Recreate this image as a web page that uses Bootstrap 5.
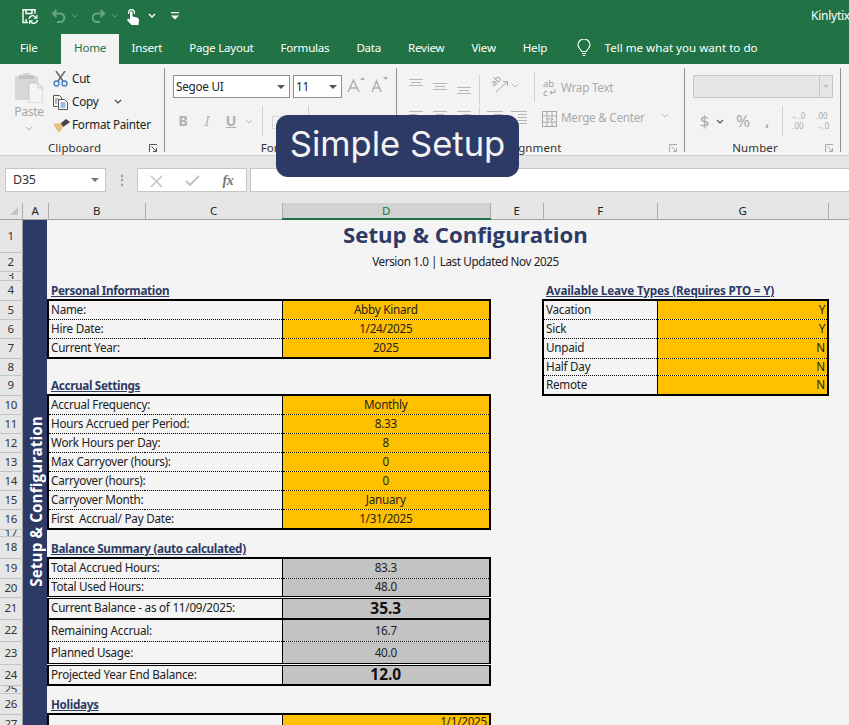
<!doctype html>
<html lang="en">
<head>
<meta charset="utf-8">
<title>Setup &amp; Configuration</title>
<link href="https://cdn.jsdelivr.net/npm/bootstrap@5.3.0/dist/css/bootstrap.min.css" rel="stylesheet">
<style>
html,body{margin:0;height:100%;overflow:hidden;background:#f4f4f4}
body{font-family:"Noto Sans","Open Sans",sans-serif;font-size:11.7px;color:#222;letter-spacing:-.25px}
.xl-app{width:849px;height:725px;overflow:hidden;position:relative}
.xl-app>*{flex:none}
.xl-title{height:32px;background:#217346;color:#fff}
.q-save{margin-left:22px}.q5{margin-left:5px}.q8{margin-left:8px}.q12{margin-left:12px}.q13{margin-left:13px}.q15{margin-left:15px}
.xl-owner{margin-left:auto;white-space:nowrap;width:38px;overflow:hidden;font-size:12px}
.xl-tabs{height:32px;background:#217346;color:#fff;padding-left:6.5px}
.xl-tab{padding:0 13.5px;height:30px;margin-top:2px;line-height:28px;font-size:11.6px;white-space:nowrap}
.xl-tab-on{background:#f3f3f3;color:#217346;margin-left:10px;margin-right:-1px;padding:0;width:58px}
.xl-tell{margin-left:16px}
.xl-tell-txt{padding:0 0 0 6px;letter-spacing:0}
.xl-rib{height:92px;background:#f3f3f3;border-bottom:1px solid #d0d0d0}
.rg{height:84px;margin-top:4px;border-right:1px solid #8f8f8f}
.rg-clip{width:165px}.rg-font{width:232px}.rg-align{width:288px}.rg-num{width:156px}
.rg-body{height:72px}
.rg-lab{height:12px;line-height:16px;font-size:11.5px;letter-spacing:.1px;color:#333}
.rg-name{flex:1;text-align:center}
.rg-launch{width:15px}
.paste-col{width:53px;padding-left:5px;padding-top:3px;color:#a8a8a8;font-size:12px}
.paste-txt{line-height:14px;margin-top:2px}
.small-col{margin-top:-1px}
.small-btn{height:23px;white-space:nowrap}
.small-ic{width:19px}
.sel{height:23px;background:#fff;border:1px solid #8f8f8f;padding:0 2px;line-height:21px;position:relative}
.sel-font{width:117px}.sel-size{width:49px;margin-left:3px}
.sel-arr{position:absolute;right:4px;top:9px;width:0;height:0;border:4px solid transparent;border-top-color:#555;border-bottom:0}
.mute{color:#b0b0b0}
.rbar{padding-top:7px}
.rrow2{padding-top:8px;margin-left:-2px}
.slot{width:24px;text-align:center;height:20px;line-height:20px;font-size:14px;font-weight:700}
.slot-s{width:12px;text-align:center;height:20px;line-height:18px}
.slot-m{width:19px;text-align:center;height:23px}
.vsep{width:1px;height:30px;background:#cfcfcf}
.sep-mid{margin:0 7px 0 7px}
.sep-b{margin:0 3px}
.sep-f{margin:0 0 0 18px}
.slot-border{margin-left:-4px}
.slot-fill{margin-left:4px}
.w-fill{width:40px;text-align:center;margin-left:6px}
.al-left{width:137px;padding-left:7px}
.al-row{height:30px}
.al-r2{margin-top:9px}
.al-right{padding-left:7px;padding-top:11px;color:#aaa}
.al-item{height:30px;white-space:nowrap;line-height:16px}
.al-ic{width:19px}
.ic-txt{font-family:"Noto Sans",sans-serif;font-weight:400;font-size:9.5px;fill:#a0a0a0;stroke:none;letter-spacing:0}
.sel-num{width:140px;height:23px;margin-left:8px;background:#e6e6e6;border:1px solid #c6c6c6;position:relative}
.sel-num i{position:absolute;right:0;top:0;width:13px;height:21px;border-left:1px solid #c6c6c6}
.sel-num i::after{content:"";position:absolute;left:3px;top:9px;border:3px solid transparent;border-top-color:#c0c0c0;border-bottom:0}
.num-row{padding:8px 0 0 10px;color:#aaa}
.num-slot{text-align:center;height:22px;line-height:22px}
.num-big{font-size:17px;font-weight:400}
.num-pct{margin-left:5px}
.dec{font-size:8px;line-height:10px;font-weight:400;letter-spacing:0}
.xl-fbar{height:47px;background:#e6e6e6;padding-top:12px;align-items:flex-start}
.name-box{width:101px;height:24px;margin-left:5px;background:#fff;border:1px solid #c6c6c6;padding-left:7px;line-height:22px;font-size:12.5px;position:relative;color:#333}
.name-box i{position:absolute;right:6px;top:9px;width:0;height:0;border:4px solid transparent;border-top-color:#777;border-bottom:0}
.fb-dots{width:31px;text-align:center;color:#999;height:24px;line-height:22px;font-weight:700}
.fb-btns{width:110px;height:24px;background:#fff;border:1px solid #c6c6c6}
.fb-btn{width:36px;text-align:center}
.fb-fx{color:#777;font-family:"Liberation Serif",serif;font-size:14px;font-style:italic;font-weight:700}
.fb-input{height:24px;margin-left:3px;flex:1;background:#fff;border:1px solid #c6c6c6;border-right:0}
.grid-x{table-layout:fixed;width:849px;border-collapse:collapse}
.grid-x td,.grid-x th{padding:0;white-space:pre;overflow:hidden;line-height:1;font-weight:400}
.cw-r{width:22px}.cw-a{width:26px}.cw-b{width:97px}.cw-c{width:137px}.cw-d{width:208px}.cw-e{width:53px}.cw-f{width:114px}.cw-g{width:171px}.cw-h{width:21px}
.hd th{height:16px;background:#e6e6e6;border-right:1px solid #ababab;border-bottom:1px solid #a0a0a0;text-align:center;color:#222;font-size:11.5px}
.hd th.hd-sel{background:#d2d2d2;border-bottom:2px solid #217346;color:#217346}
.hd th.hd-last{border-right:0}
.grid-x th.rn{background:#e6e6e6;border-right:1px solid #a0a0a0;border-bottom:1px solid #c4c4c4;text-align:center;color:#333;font-size:11.5px}
.rn-clip{overflow:hidden;height:6px;line-height:6px}
.rh6{height:7px}.rh8{height:8px}.rh9{height:9px}.rh16{height:17px}.rh19{height:19px}.rh20{height:20px}.rh21{height:21px}.rh22{height:22px}.rh23{height:23px}.rh33{height:33px}
.side{background:#2d3a66;color:#fff;vertical-align:middle;text-align:center;padding-top:50px!important}
.side-txt{writing-mode:vertical-rl;transform:rotate(180deg);display:inline-block;font-weight:700;font-size:15.2px;letter-spacing:.15px;line-height:26px;font-family:"Open Sans",sans-serif}
.ttl{text-align:center;padding-left:34px!important;color:#2d3a66;font-size:22.2px;font-weight:700!important;letter-spacing:0;font-family:"Open Sans",sans-serif;vertical-align:top}
.ttl span{display:block;line-height:30px}
.ver{text-align:center;padding-left:34px!important;color:#222;letter-spacing:-.4px}
.sec{color:#2d3a66;font-weight:700!important;text-decoration:underline;vertical-align:bottom;padding:0 0 2px 3px!important;letter-spacing:-.33px}
.sec-wide{letter-spacing:-.18px}
.lbl{padding:0 0 0 2px!important;background:#f4f4f4}
.nudge{padding-top:2px!important}
.in{background:#ffc000;text-align:center}
.calc{background:#c3c3c3;text-align:center}
.big{font-size:15.5px;font-weight:700!important;color:#111;letter-spacing:0}
.in-end{text-align:right!important;padding-right:2px!important}
.cell-top{vertical-align:top;padding-top:1px!important}
.bT{border-top:2px solid #000}.bB{border-bottom:2px solid #000}.bL{border-left:2px solid #000}.bR{border-right:2px solid #000}
.bdiv{border-right:1px solid #000}
.dot{border-bottom:1px dotted #000}
.dbl{border-bottom:3px double #000}
.banner{position:absolute;left:276px;top:115px;width:243px;height:62px;background:#2d3a66;border-radius:12px;color:#f3f3f3;font-family:Inter,sans-serif;font-size:34.6px;font-weight:400;letter-spacing:0;text-align:center;line-height:57px}
</style>
</head>
<body>
<div class="xl-app d-flex flex-column">
  <div class="xl-title d-flex align-items-center">
    <div class="d-flex align-items-center">
      <svg class="q-save" width="16" height="15" viewBox="0 0 16 15" fill="none" stroke="#fff" stroke-width="1.400"><path d="M6 13.500H1V.7h12v4"/><path d="M4 1v3.500h6V1M4 13v-3"/><path d="M7 10a3.700 3.700 0 0 1 6.500-2l1 1M15.500 11a3.700 3.700 0 0 1-6.500 2l-1-1"/><path d="M15 6v3.300h-3.300M7.500 15v-3.300h3.300" stroke-width="1.100"/></svg>
      <svg class="q13" width="15" height="14" viewBox="0 0 15 14" fill="none" stroke="#6aa584" stroke-width="2"><path d="M5.500 1 2 4.500 5.500 8"/><path d="M2 4.500h7a4 4 0 0 1 0 8.500H6"/></svg>
      <svg class="q5" width="8" height="6" viewBox="0 0 8 6" fill="none" stroke="#5f9c7c"><path d="m1 1 3 3 3-3"/></svg>
      <svg class="q12" width="15" height="14" viewBox="0 0 15 14" fill="none" stroke="#6aa584" stroke-width="2"><path d="M9.500 1 13 4.500 9.500 8"/><path d="M13 4.500H6a4 4 0 0 0 0 8.500h3"/></svg>
      <svg class="q5" width="8" height="6" viewBox="0 0 8 6" fill="none" stroke="#5f9c7c"><path d="m1 1 3 3 3-3"/></svg>
      <svg class="q8" width="13" height="17" viewBox="0 0 13 17" fill="#fff"><path d="M1 4.500a3.500 3.500 0 0 1 7 0V6H6.800V4.500a2.300 2.300 0 0 0-4.600 0V6H1z"/><path d="M3 3.500h2.500v5l3.500.8c2 .4 3 1.200 3 2.700l-.5 5H4.500L0 12l1-1.500 2 1.300z"/></svg>
      <svg class="q8" width="8" height="6" viewBox="0 0 8 6" fill="none" stroke="#fff" stroke-width="1.400"><path d="m1 1 3 3 3-3"/></svg>
      <svg class="q15" width="8" height="8" viewBox="0 0 8 8" fill="#fff"><rect width="8" height="1.300"/><path d="M0 3.500h8L4 7.500z"/></svg>
    </div>
    <div class="xl-owner">Kinlytix</div>
  </div>
  <div class="xl-tabs d-flex">
    <div class="xl-tab">File</div>
    <div class="xl-tab xl-tab-on text-center">Home</div>
    <div class="xl-tab">Insert</div>
    <div class="xl-tab">Page Layout</div>
    <div class="xl-tab">Formulas</div>
    <div class="xl-tab">Data</div>
    <div class="xl-tab">Review</div>
    <div class="xl-tab">View</div>
    <div class="xl-tab">Help</div>
    <div class="d-flex align-items-center xl-tell">
      <svg class="me-2" width="14" height="18" viewBox="0 0 14 18" fill="none" stroke="#fff" stroke-width="1.100"><path d="M4.500 12.500C4 10 1 9 1 6a6 6 0 0 1 12 0c0 3-3 4-3.500 6.500z"/><path d="M5 14.500h4M5.500 16.500h3"/></svg>
      <div class="xl-tab xl-tell-txt">Tell me what you want to do</div>
    </div>
  </div>
  <div class="xl-rib d-flex">
    <div class="rg rg-clip d-flex flex-column">
      <div class="rg-body d-flex">
        <div class="paste-col text-center">
          <svg width="28" height="32" viewBox="0 0 28 32"><path d="M0 5h8V2h7v3h8v24H0z" fill="#d9d6d6"/><rect x="4" y="4" width="15" height="4" fill="#c4c2c2"/><path d="M14 12h9l5 5v15H14z" fill="#f4f4f6" stroke="#c9c7c9"/><path d="M23 12v5h5" fill="none" stroke="#c9c7c9"/></svg>
          <div class="paste-txt">Paste</div>
          <svg width="8" height="6" viewBox="0 0 8 6" fill="none" stroke="#aaa"><path d="m1 1 3 3 3-3"/></svg>
        </div>
        <div class="small-col">
          <div class="small-btn d-flex align-items-center"><div class="small-ic"><svg width="15" height="16" viewBox="0 0 15 16" fill="none"><path d="M3 0l7 10M12 0 5 10" stroke="#666" stroke-width="1.500"/><circle cx="3.500" cy="12.500" r="2.500" stroke="#3b7cc2" stroke-width="1.300"/><circle cx="11.500" cy="12.500" r="2.500" stroke="#3b7cc2" stroke-width="1.300"/></svg></div>Cut</div>
          <div class="small-btn d-flex align-items-center"><div class="small-ic"><svg width="16" height="15" viewBox="0 0 16 15" fill="none" stroke="#555"><path d="M4.500 11.500H.5V.5h6l2 2v2"/><path d="M5.500 4.500h6l3 3v7h-9z" fill="#fff"/><path d="M7.500 8h5M7.500 10h5M7.500 12h5" stroke="#3b7cc2"/><path d="M2 4h3M2 6h2M2 8h2" stroke="#777"/></svg></div>Copy<svg class="ms-3" width="8" height="6" viewBox="0 0 8 6" fill="none" stroke="#444" stroke-width="1.200"><path d="m1 1 3 3 3-3"/></svg></div>
          <div class="small-btn d-flex align-items-center"><div class="small-ic"><svg width="17" height="14" viewBox="0 0 17 14"><path d="M0 5 8 4l2 4-4 6z" fill="#e6bf7e"/><path d="M8 4 13 0l4 3-4 3-3 2z" fill="#444"/></svg></div>Format Painter</div>
        </div>
      </div>
      <div class="rg-lab d-flex"><div class="rg-name">Clipboard</div><div class="rg-launch"><svg width="9" height="9" viewBox="0 0 9 9" fill="none" stroke="#555"><path d="M.5 8V.5H8M2.500 2.500 7 7M4 7.500h3.500V4"/></svg></div></div>
    </div>
    <div class="rg rg-font d-flex flex-column">
      <div class="rg-body ps-2">
        <div class="d-flex rbar">
          <div class="sel sel-font">Segoe UI<span class="sel-arr"></span></div>
          <div class="sel sel-size">11<span class="sel-arr"></span></div>
          <div class="slot-m ms-1 mute"><svg width="20" height="20" viewBox="0 0 20 20" fill="none" stroke="#b0b0b0" stroke-width="1.500"><path d="M2 17 7.500 5 13 17M4 13h7"/><path d="M14 5l2.500-3L19 5" stroke-width="0" fill="#b0b0b0"/></svg></div>
          <div class="slot-m ms-1 mute"><svg width="20" height="20" viewBox="0 0 20 20" fill="none" stroke="#b0b0b0" stroke-width="1.500"><path d="M3 17 7.500 6 12 17M5 13h5"/><path d="M14 2l2.500 3L19 2" stroke-width="0" fill="#b0b0b0"/></svg></div>
        </div>
        <div class="d-flex align-items-center rrow2 mute">
          <div class="slot">B</div>
          <div class="slot fst-italic fw-normal">I</div>
          <div class="slot text-decoration-underline">U</div>
          <div class="slot-s"><svg width="8" height="6" viewBox="0 0 8 6" fill="none" stroke="#b8b8b8"><path d="m1 1 3 3 3-3"/></svg></div>
          <div class="vsep sep-mid"></div>
          <div class="slot slot-border"><svg width="13" height="13" viewBox="0 0 13 13" fill="none" stroke="#b8b8b8" stroke-dasharray="1 1"><rect x=".5" y=".5" width="12" height="12"/></svg></div>
          <div class="vsep sep-f"></div>
          <div class="slot slot-fill"><svg width="16" height="16" viewBox="0 0 16 16" fill="none" stroke="#b0b0b0"><path d="M6 1 14 9 8 15 1 8z"/></svg></div>
          <div class="w-fill"><svg width="12" height="14" viewBox="0 0 12 14" fill="none" stroke="#b0b0b0" stroke-width="1.300"><path d="M1 13 6 1l5 12"/></svg></div>
        </div>
      </div>
      <div class="rg-lab d-flex"><div class="rg-name">Font</div><div class="rg-launch"></div></div>
    </div>
    <div class="rg rg-align d-flex flex-column">
      <div class="rg-body d-flex">
        <div class="al-left">
          <div class="d-flex al-row rbar">
            <div class="slot"><svg width="14" height="20" viewBox="0 0 14 20" stroke="#b5b5b5"><path d="M0 3.500h14M2 6.500h10M0 9.500h14"/></svg></div>
            <div class="slot"><svg width="14" height="20" viewBox="0 0 14 20" stroke="#b5b5b5"><path d="M0 7.500h14M2 10.500h10M0 13.500h14"/></svg></div>
            <div class="slot"><svg width="14" height="20" viewBox="0 0 14 20" stroke="#b5b5b5"><path d="M0 11.500h14M2 14.500h10M0 17.500h14"/></svg></div>
            <div class="vsep sep-b"></div>
            <div class="d-flex ms-2"><svg width="18" height="20" viewBox="0 0 18 20" fill="none" stroke="#a8a8a8"><text class="ic-txt" transform="translate(3 12) rotate(-45)" x="0" y="0">ab</text><path d="M5 17 16 7M12 6.500h4.500V11"/></svg><div class="slot-s"><svg width="8" height="6" viewBox="0 0 8 6" fill="none" stroke="#b8b8b8"><path d="m1 1 3 3 3-3"/></svg></div></div>
          </div>
          <div class="d-flex al-row al-r2">
            <div class="slot"><svg width="14" height="14" viewBox="0 0 14 14" stroke="#b5b5b5"><path d="M0 .5h14M0 3.500h8M0 6.500h14"/></svg></div>
            <div class="slot"><svg width="14" height="14" viewBox="0 0 14 14" stroke="#b5b5b5"><path d="M0 .5h14M3 3.500h8M0 6.500h14"/></svg></div>
            <div class="slot"><svg width="14" height="14" viewBox="0 0 14 14" stroke="#b5b5b5"><path d="M0 .5h14M6 3.500h8M0 6.500h14"/></svg></div>
            <div class="vsep sep-b"></div>
            <div class="slot"><svg width="16" height="14" viewBox="0 0 16 14" stroke="#b5b5b5"><path d="M0 .5h16M7 3.500h9M7 6.500h9M7 9.500h9"/></svg></div>
            <div class="slot"><svg width="16" height="14" viewBox="0 0 16 14" stroke="#b5b5b5"><path d="M0 .5h16M7 3.500h9M7 6.500h9M7 9.500h9M0 12.500h16"/></svg></div>
          </div>
        </div>
        <div class="vsep mt-1 align-self-start"></div>
        <div class="al-right">
          <div class="al-item d-flex align-items-start"><div class="al-ic"><svg width="15" height="20" viewBox="0 0 15 20"><text class="ic-txt" x="1" y="8">ab</text><text class="ic-txt" x="1" y="17">c</text><path d="M13 10v3.500H8.500M10 12l-2 1.500 2 1.500" fill="none" stroke="#a8a8a8"/></svg></div>Wrap Text</div>
          <div class="al-item d-flex align-items-start"><div class="al-ic"><svg width="15" height="16" viewBox="0 0 15 16" fill="none" stroke="#a8a8a8"><rect x=".5" y=".5" width="14" height="15"/><path d="M0 5h15M0 11h15M4 8h7M4 8l2-2M4 8l2 2M11 8 9 6M11 8l-2 2M5 0v5M10 0v5M5 11v5M10 11v5"/></svg></div>Merge &amp; Center<svg class="ms-3 mt-1" width="8" height="6" viewBox="0 0 8 6" fill="none" stroke="#b8b8b8"><path d="m1 1 3 3 3-3"/></svg></div>
        </div>
      </div>
      <div class="rg-lab d-flex"><div class="rg-name">Alignment</div><div class="rg-launch"><svg width="9" height="9" viewBox="0 0 9 9" fill="none" stroke="#aaa"><path d="M.5 8V.5H8M2.500 2.500 7 7M4 7.500h3.500V4"/></svg></div></div>
    </div>
    <div class="rg rg-num d-flex flex-column">
      <div class="rg-body">
        <div class="rbar"><div class="sel-num"><i></i></div></div>
        <div class="d-flex align-items-center num-row">
          <div class="slot-m num-slot num-big">$</div>
          <div class="slot-s"><svg width="8" height="6" viewBox="0 0 8 6" fill="none" stroke="#555" stroke-width="1.200"><path d="m1 1 3 3 3-3"/></svg></div>
          <div class="slot num-slot num-big num-pct">%</div>
          <div class="slot num-slot fw-bold">,</div>
          <div class="vsep sep-b"></div>
          <div class="slot dec">←.0<br>.00</div>
          <div class="slot dec">.00<br>→.0</div>
        </div>
      </div>
      <div class="rg-lab d-flex"><div class="rg-name">Number</div><div class="rg-launch"><svg width="9" height="9" viewBox="0 0 9 9" fill="none" stroke="#aaa"><path d="M.5 8V.5H8M2.500 2.500 7 7M4 7.500h3.500V4"/></svg></div></div>
    </div>
  </div>
  <div class="xl-fbar d-flex">
    <div class="name-box">D35<i></i></div>
    <div class="fb-dots">⋮</div>
    <div class="fb-btns d-flex align-items-center">
      <div class="fb-btn"><svg width="13" height="13" viewBox="0 0 13 13" stroke="#c4c4c4" stroke-width="1.600"><path d="m1 1 11 11M12 1 1 12"/></svg></div>
      <div class="fb-btn"><svg width="15" height="12" viewBox="0 0 15 12" fill="none" stroke="#c4c4c4" stroke-width="2"><path d="m1 6 4 4 9-9"/></svg></div>
      <div class="fb-btn fb-fx">fx</div>
    </div>
    <div class="fb-input"></div>
  </div>
  <table class="grid-x">
    <colgroup><col class="cw-r"><col class="cw-a"><col class="cw-b"><col class="cw-c"><col class="cw-d"><col class="cw-e"><col class="cw-f"><col class="cw-g"><col class="cw-h"></colgroup>
    <tr class="hd"><th><svg class="d-block ms-auto" width="16" height="10" viewBox="0 0 16 10"><path d="M4 9 12 1v8z" fill="#c4c4c4"/></svg></th><th>A</th><th>B</th><th>C</th><th class="hd-sel">D</th><th>E</th><th>F</th><th>G</th><th class="hd-last"></th></tr>
    <tr class="rh33"><th class="rn">1</th><td class="side" rowspan="27"><span class="side-txt">Setup &amp; Configuration</span></td><td class="ttl" colspan="7"><span>Setup &amp; Configuration</span></td></tr>
    <tr class="rh19"><th class="rn">2</th><td class="ver" colspan="7">Version 1.0 | Last Updated Nov 2025</td></tr>
    <tr class="rh9"><th class="rn"><div class="rn-clip">3</div></th><td colspan="7"></td></tr>
    <tr class="rh20"><th class="rn">4</th><td class="sec" colspan="3">Personal Information</td><td></td><td class="sec sec-wide" colspan="3">Available Leave Types (Requires PTO = Y)</td></tr>
    <tr class="rh19"><th class="rn">5</th><td class="lbl bT bL dot bdiv" colspan="2">Name:</td><td class="in bT bR dot">Abby Kinard</td><td></td><td class="lbl bT bL dot bdiv">Vacation</td><td class="in in-end bT bR dot">Y</td><td></td></tr>
    <tr class="rh19"><th class="rn">6</th><td class="lbl bL dot bdiv" colspan="2">Hire Date:</td><td class="in bR dot">1/24/2025</td><td></td><td class="lbl bL dot bdiv">Sick</td><td class="in in-end bR dot">Y</td><td></td></tr>
    <tr class="rh20"><th class="rn">7</th><td class="lbl bL bB bdiv" colspan="2">Current Year:</td><td class="in bR bB">2025</td><td></td><td class="lbl bL dot bdiv">Unpaid</td><td class="in in-end bR dot">N</td><td></td></tr>
    <tr class="rh16"><th class="rn">8</th><td colspan="3"></td><td></td><td class="lbl bL dot bdiv">Half Day</td><td class="in in-end bR dot">N</td><td></td></tr>
    <tr class="rh20"><th class="rn">9</th><td class="sec" colspan="3">Accrual Settings</td><td></td><td class="lbl bL bB bdiv">Remote</td><td class="in in-end bR bB">N</td><td></td></tr>
    <tr class="rh19"><th class="rn">10</th><td class="lbl bT bL dot bdiv" colspan="2">Accrual Frequency:</td><td class="in bT bR dot">Monthly</td><td colspan="4"></td></tr>
    <tr class="rh19"><th class="rn">11</th><td class="lbl bL dot bdiv" colspan="2">Hours Accrued per Period:</td><td class="in bR dot">8.33</td><td colspan="4"></td></tr>
    <tr class="rh19"><th class="rn">12</th><td class="lbl bL dot bdiv" colspan="2">Work Hours per Day:</td><td class="in bR dot">8</td><td colspan="4"></td></tr>
    <tr class="rh19"><th class="rn">13</th><td class="lbl bL dot bdiv" colspan="2">Max Carryover (hours):</td><td class="in bR dot">0</td><td colspan="4"></td></tr>
    <tr class="rh19"><th class="rn">14</th><td class="lbl bL dot bdiv" colspan="2">Carryover (hours):</td><td class="in bR dot">0</td><td colspan="4"></td></tr>
    <tr class="rh19"><th class="rn">15</th><td class="lbl bL dot bdiv" colspan="2">Carryover Month:</td><td class="in bR dot">January</td><td colspan="4"></td></tr>
    <tr class="rh20"><th class="rn">16</th><td class="lbl bL bB bdiv" colspan="2">First  Accrual/ Pay Date:</td><td class="in bR bB">1/31/2025</td><td colspan="4"></td></tr>
    <tr class="rh6"><th class="rn"><div class="rn-clip">17</div></th><td colspan="7"></td></tr>
    <tr class="rh22"><th class="rn">18</th><td class="sec" colspan="3">Balance Summary (auto calculated)</td><td colspan="4"></td></tr>
    <tr class="rh20"><th class="rn">19</th><td class="lbl bT bL dot bdiv" colspan="2">Total Accrued Hours:</td><td class="calc bT bR dot">83.3</td><td colspan="4"></td></tr>
    <tr class="rh19"><th class="rn">20</th><td class="lbl bL dbl bdiv" colspan="2">Total Used Hours:</td><td class="calc bR dbl">48.0</td><td colspan="4"></td></tr>
    <tr class="rh22"><th class="rn">21</th><td class="lbl bL bB bdiv" colspan="2">Current Balance - as of 11/09/2025:</td><td class="calc bR bB big">35.3</td><td colspan="4"></td></tr>
    <tr class="rh22"><th class="rn">22</th><td class="lbl nudge bL dot bdiv" colspan="2">Remaining Accrual:</td><td class="calc nudge bR dot">16.7</td><td colspan="4"></td></tr>
    <tr class="rh23"><th class="rn">23</th><td class="lbl nudge bL dbl bdiv" colspan="2">Planned Usage:</td><td class="calc nudge bR dbl">40.0</td><td colspan="4"></td></tr>
    <tr class="rh21"><th class="rn">24</th><td class="lbl bL bB bdiv" colspan="2">Projected Year End Balance:</td><td class="calc bR bB big">12.0</td><td colspan="4"></td></tr>
    <tr class="rh8"><th class="rn"><div class="rn-clip">25</div></th><td colspan="7"></td></tr>
    <tr class="rh21"><th class="rn">26</th><td class="sec" colspan="3">Holidays</td><td colspan="4"></td></tr>
    <tr class="rh20"><th class="rn">27</th><td class="lbl bT bL bdiv" colspan="2"></td><td class="in in-end cell-top bT bR">1/1/2025</td><td colspan="4"></td></tr>
  </table>
  <div class="banner">Simple Setup</div>
</div>
</body>
</html>
